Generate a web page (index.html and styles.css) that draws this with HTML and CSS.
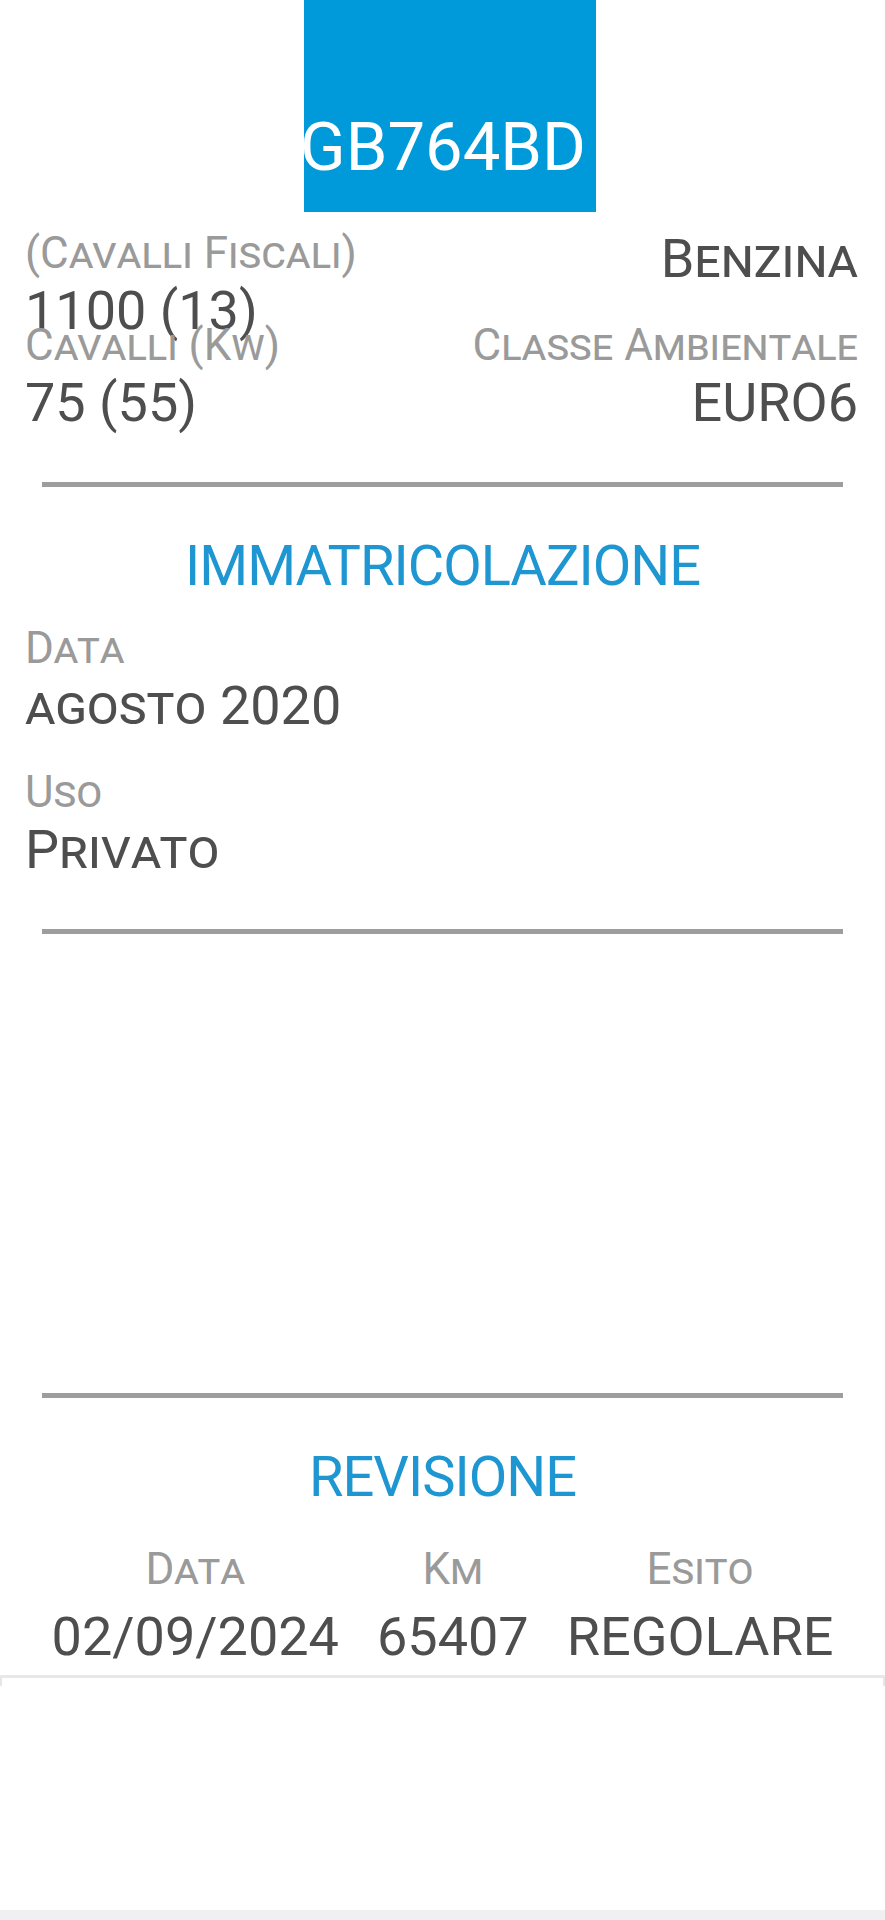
FILE: index.html
```html
<!DOCTYPE html>
<html lang="it">
<head>
<meta charset="utf-8">
<title>GB764BD</title>
<link rel="stylesheet" href="styles.css">
</head>
<body>
<header class="header">
  <div class="plate"><span class="plate-text">GB764BD</span></div>
</header>
<main class="content">
  <section class="grid">
    <div class="cell">
      <div class="label">Cilindrata<br>(Cavalli Fiscali)</div>
      <div class="value">1100 (13)</div>
    </div>
    <div class="cell right">
      <div class="label">Alimentazione</div>
      <div class="value">Benzina</div>
    </div>
    <div class="cell">
      <div class="label">Cavalli (Kw)</div>
      <div class="value">75 (55)</div>
    </div>
    <div class="cell right">
      <div class="label">Classe Ambientale</div>
      <div class="value">EURO6</div>
    </div>
  </section>
  <div class="divider"></div>

  <h2 class="title">IMMATRICOLAZIONE</h2>
  <section class="grid">
    <div class="cell">
      <div class="label">Data</div>
      <div class="value">agosto 2020</div>
    </div>
    <div class="cell"></div>
    <div class="cell">
      <div class="label">Uso</div>
      <div class="value">Privato</div>
    </div>
    <div class="cell"></div>
  </section>
  <div class="divider"></div>

  <section class="spacer"></section>
  <div class="divider"></div>

  <h2 class="title rev-title">REVISIONE</h2>
  <section class="rev">
    <div class="label">Data</div>
    <div class="label">Km</div>
    <div class="label">Esito</div>
    <div class="value">02/09/2024</div>
    <div class="value">65407</div>
    <div class="value">REGOLARE</div>
  </section>

  <div class="card"></div>
  <div class="bottom-bar"></div>
</main>
</body>
</html>
```

FILE: styles.css
```css
* {
  box-sizing: border-box;
}

html,
body {
  margin: 0;
  padding: 0;
  background: #ffffff;
}

body {
  width: 885px;
  font-family: Roboto, "Noto Sans", "Liberation Sans", sans-serif;
  font-weight: 400;
}

.header {
  position: fixed;
  top: 0;
  left: 0;
  width: 885px;
  height: 216px;
  background: #ffffff;
  z-index: 10;
}

.plate {
  margin-left: 304px;
  width: 292px;
  height: 212px;
  padding-top: 107px;
  background: #0099da;
  color: #ffffff;
  font-size: 67px;
  line-height: 80px;
  white-space: nowrap;
}

.plate-text {
  margin-left: -4px;
}

.content {
  padding-top: 175px;
}

.grid {
  display: grid;
  grid-template-columns: 1fr 1fr;
  grid-auto-rows: 144px;
  padding: 0 27px 0 25px;
}

.cell {
  min-width: 0;
}

.cell.right {
  text-align: right;
}

.label {
  font-size: 44px;
  line-height: 52px;
  color: #9a9a9a;
  font-variant: small-caps;
  white-space: nowrap;
}

.value {
  font-size: 54px;
  line-height: 64px;
  color: #4e4e4e;
  font-variant: small-caps;
  white-space: nowrap;
}

.divider {
  height: 5px;
  margin: 19px 42px 0;
  background: #9d9d9d;
}

.title {
  margin: 46px 0 23px;
  font-size: 56px;
  line-height: 66px;
  font-weight: 400;
  letter-spacing: -1px;
  color: #1e96d2;
  text-align: center;
}

.spacer {
  height: 440px;
}

.rev-title {
  margin-bottom: 33px;
}

.rev {
  display: grid;
  grid-template-columns: repeat(3, auto);
  column-gap: 38px;
  row-gap: 10px;
  justify-content: center;
  text-align: center;
}

.card {
  margin-top: 6px;
  height: 235px;
  border-top: 3px solid #e8e8e8;
  background:
    linear-gradient(#e6e6e6, #e6e6e6) left top / 2px 8px no-repeat,
    linear-gradient(#e6e6e6, #e6e6e6) right top / 2px 8px no-repeat,
    #ffffff;
}

.bottom-bar {
  height: 29px;
  background: #f0f0f2;
}
```
